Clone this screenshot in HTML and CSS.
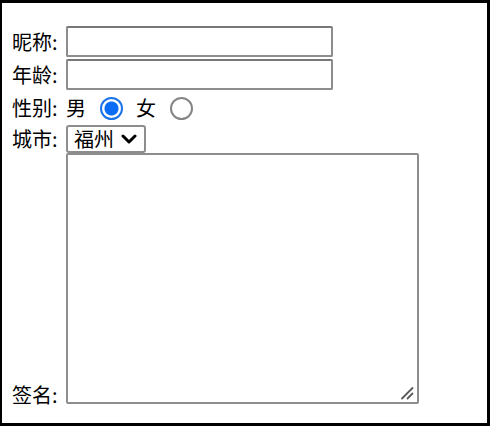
FILE: index.html
```html
<!DOCTYPE html>
<html lang="zh-CN">
<head>
<meta charset="utf-8">
<title>表单</title>
<link rel="stylesheet" href="styles.css">
</head>
<body>
<form class="frame">
  <div class="row">
    <label class="label" for="nick">昵称:</label>
    <input class="text" id="nick" type="text">
  </div>
  <div class="row row-gap">
    <label class="label" for="age">年龄:</label>
    <input class="text" id="age" type="text">
  </div>
  <div class="row row-sex">
    <span class="label">性别:</span>
    <span class="opt">男</span>
    <input class="radio radio-first" type="radio" name="sex" checked>
    <span class="opt">女</span>
    <input class="radio radio-second" type="radio" name="sex">
  </div>
  <div class="row row-city">
    <label class="label" for="city">城市:</label>
    <span class="select-wrap">
      <select class="select" id="city">
        <option>福州</option>
        <option>厦门</option>
      </select>
      <svg class="chev" width="16" height="10" viewBox="0 0 16 10"><polyline points="2,2 8,8 14,2" fill="none" stroke="#000" stroke-width="3" stroke-linecap="round" stroke-linejoin="round"/></svg>
    </span>
  </div>
  <div class="row row-sign">
    <label class="label label-sign" for="sign">签名:</label>
    <span class="area-wrap">
      <textarea class="area" id="sign"></textarea>
      <svg class="grip" width="14" height="14" viewBox="0 0 14 14"><line x1="12.5" y1="2" x2="2" y2="12.5" stroke="#5a5a5a" stroke-width="1.8" stroke-linecap="round"/><line x1="12.5" y1="7.5" x2="7.5" y2="12.5" stroke="#5a5a5a" stroke-width="1.8" stroke-linecap="round"/></svg>
    </span>
  </div>
</form>
</body>
</html>
```

FILE: styles.css
```css
html, body {
  margin: 0;
  padding: 0;
  background: #fff;
}

.frame {
  box-sizing: border-box;
  width: 490px;
  height: 426px;
  margin: 0;
  border-style: solid;
  border-color: #000;
  border-width: 3px 3px 3px 2px;
  padding: 23px 0 0 10px;
  font-family: "Noto Sans CJK SC", "Microsoft YaHei", sans-serif;
  font-size: 20px;
  line-height: 20px;
  color: #000;
  background: #fff;
}

.row {
  display: flex;
  align-items: center;
}

.row-gap {
  margin-top: 2px;
}

.label {
  flex: none;
  width: 54px;
  line-height: 20px;
}

.text {
  box-sizing: border-box;
  width: 267px;
  height: 31px;
  margin: 0;
  padding: 0 4px;
  border: 2px solid #8d8d8d;
  border-top-color: #777;
  border-radius: 2px;
  font: inherit;
  background: #fff;
  outline: none;
}

.row-sex {
  height: 35px;
}

.opt {
  flex: none;
  width: 20px;
  line-height: 20px;
}

.radio {
  appearance: none;
  -webkit-appearance: none;
  box-sizing: border-box;
  width: 23px;
  height: 23px;
  margin: 1px 0 0;
  border-radius: 50%;
  background: #fff;
  border: 2px solid #858585;
  flex: none;
}

.radio:checked {
  border: 2px solid #1a73e8;
  background: radial-gradient(circle, #0b6cf5 0 6.5px, #fff 7.5px);
}

.radio-first {
  margin-left: 14px;
  margin-right: 13px;
}

.radio-second {
  margin-left: 14px;
}

.row-city {
  height: 28px;
}

.select-wrap {
  position: relative;
  display: inline-block;
  width: 80px;
  height: 28px;
}

.select {
  appearance: none;
  -webkit-appearance: none;
  box-sizing: border-box;
  width: 80px;
  height: 28px;
  margin: 0;
  padding: 0 0 0 6px;
  border: 2px solid #8d8d8d;
  border-radius: 3px;
  background: #fff;
  font: inherit;
  line-height: 24px;
  color: #000;
}

.chev {
  position: absolute;
  left: 55px;
  top: 9px;
  pointer-events: none;
}

.row-sign {
  align-items: flex-end;
}

.label-sign {
  position: relative;
  top: 1px;
}

.area-wrap {
  position: relative;
  display: block;
  width: 353px;
  height: 251px;
}

.area {
  display: block;
  box-sizing: border-box;
  width: 353px;
  height: 251px;
  margin: 0;
  padding: 2px;
  border: 2px solid #8d8d8d;
  border-radius: 2px;
  font: inherit;
  background: #fff;
  outline: none;
  resize: none;
}

.grip {
  position: absolute;
  right: 5px;
  bottom: 4px;
  pointer-events: none;
}
```
